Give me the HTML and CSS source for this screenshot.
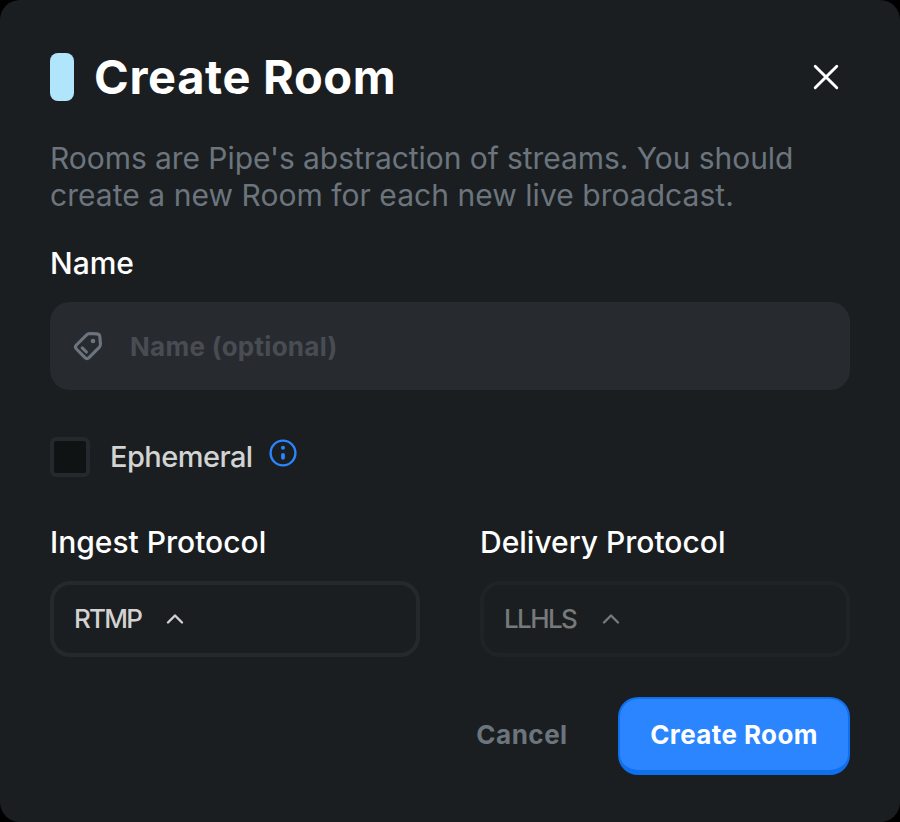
FILE: index.html
```html
<!DOCTYPE html>
<html lang="en">
<head>
<meta charset="utf-8">
<title>Create Room</title>
<link rel="stylesheet" href="styles.css">
</head>
<body>
<main class="modal">
  <header class="header">
    <span class="accent"></span>
    <h1 class="title">Create Room</h1>
    <button class="close" aria-label="Close"><svg width="28" height="28" viewBox="0 0 28 28" fill="none" stroke="currentColor" stroke-width="2.9" stroke-linecap="round"><path d="M3.2 3.2 24.8 24.8M24.8 3.2 3.2 24.8"/></svg></button>
  </header>
  <p class="description"><span class="line-one">Rooms are Pipe's abstraction of streams. You should</span><br><span class="line-two">create a new Room for each new live broadcast.</span></p>
  <h2 class="label label-name">Name</h2>
  <div class="input">
    <svg class="tag" width="32" height="32" viewBox="0 0 32 32" fill="none" stroke="currentColor" stroke-width="3.1" stroke-linecap="round" stroke-linejoin="round"><path d="M17.6 3.5 25 3.9Q27.6 4.2 27.9 7.1L28.4 14Q28.6 16 27.2 17.4L17 27.6Q15 29.5 13 27.6L4.4 19Q2.5 17 4.4 15L14.6 4.8Q15.9 3.5 17.6 3.5Z"/><path d="M10.2 17.8 14.4 22"/><circle cx="21" cy="11" r="2.3" fill="currentColor" stroke="none"/></svg>
    <span class="placeholder">Name (optional)</span>
  </div>
  <div class="check-row">
    <span class="checkbox"></span>
    <span class="check-label">Ephemeral</span>
    <svg class="info" width="28" height="28" viewBox="0 0 28 28" fill="none" stroke="currentColor"><circle cx="14" cy="14" r="12.4" stroke-width="2.4"/><path d="M14 15.8v3" stroke-width="3.8" stroke-linecap="round"/><circle cx="14" cy="8.7" r="2" fill="currentColor" stroke="none"/></svg>
  </div>
  <div class="protocols">
    <section>
      <h2 class="label label-ingest">Ingest Protocol</h2>
      <div class="select"><span class="rtmp">RTMP</span><svg width="18" height="12" viewBox="0 0 18 12" fill="none" stroke="currentColor" stroke-width="2.4" stroke-linecap="round" stroke-linejoin="round"><path d="M2 9.5 9 2.5 16 9.5"/></svg></div>
    </section>
    <section>
      <h2 class="label label-delivery">Delivery Protocol</h2>
      <div class="select disabled"><span class="llhls">LLHLS</span><svg width="18" height="12" viewBox="0 0 18 12" fill="none" stroke="currentColor" stroke-width="2.4" stroke-linecap="round" stroke-linejoin="round"><path d="M2 9.5 9 2.5 16 9.5"/></svg></div>
    </section>
  </div>
  <footer class="footer">
    <button class="cancel">Cancel</button>
    <button class="create">Create Room</button>
  </footer>
</main>
</body>
</html>
```
FILE: styles.css
```css
* { box-sizing: border-box; }
body { margin: 0; background: #000; font-family: Inter, "Liberation Sans", sans-serif; }
button { border: 0; padding: 0; background: none; font: inherit; }
svg { display: block; flex: none; }
.modal { width: 900px; height: 822px; padding: 53px 50px 0; border-radius: 20px; background: #1a1e20; overflow: hidden; }
.header { display: flex; align-items: center; height: 48px; }
.accent { width: 24px; height: 48px; border-radius: 8px; background: #b1e5fc; }
.title { margin: 0 auto 0 20px; color: #fff; font-size: 47px; font-weight: 700; line-height: 48px; letter-spacing: 0.65px; white-space: nowrap; }
.close { margin-right: 10px; color: #fff; }
.description { margin: 39px 0 0; color: #6c757d; font-size: 30px; line-height: 37px; white-space: nowrap; }
.line-one { letter-spacing: -0.06px; }
.line-two { letter-spacing: 0.04px; }
.label { margin: 0; color: #fff; font-size: 30px; font-weight: 500; line-height: 38px; white-space: nowrap; }
.label-name { margin-top: 30px; }
.input { display: flex; align-items: center; height: 88px; margin-top: 20px; padding-left: 22px; border-radius: 20px; background: #272b30; color: #6c757d; }
.placeholder { margin-left: 26px; color: #494d53; font-size: 26px; font-weight: 700; letter-spacing: 0.28px; }
.check-row { display: flex; align-items: center; height: 40px; margin-top: 47px; }
.checkbox { width: 40px; height: 40px; border: 4px solid #25292d; border-radius: 6px; background: #101314; }
.check-label { margin: -2px 0 0 20px; color: #d3d3d3; font-size: 29px; font-weight: 500; letter-spacing: -0.55px; width: 143px; white-space: nowrap; }
.info { margin: 0 0 8px 16px; color: #2a85ff; }
.protocols { display: grid; grid-template-columns: 370px 370px; gap: 60px; margin-top: 46px; }
.select { display: flex; align-items: center; height: 76px; margin-top: 20px; padding-left: 20px; border: 4px solid #25292c; border-radius: 20px; color: #d2d2d2; font-size: 26px; font-weight: 500; }
.select span { width: 68px; margin-top: -2px; letter-spacing: -1.8px; }
.select svg { margin-left: 24px; }
.select .llhls { width: 74px; letter-spacing: -1.6px; }
.disabled { border-color: #202326; color: #77797a; }
.footer { display: flex; justify-content: flex-end; margin-top: 40px; font-size: 26px; font-weight: 700; }
.cancel { width: 92px; margin-right: 50px; padding-bottom: 4px; color: #6c757d; letter-spacing: 0.5px; white-space: nowrap; }
.create { width: 232px; height: 78px; padding-bottom: 0; border: solid #0f6fec; border-width: 2px 2px 5px; border-radius: 20px; background: #2a85ff; color: #fff; letter-spacing: 0.4px; white-space: nowrap; }
```
